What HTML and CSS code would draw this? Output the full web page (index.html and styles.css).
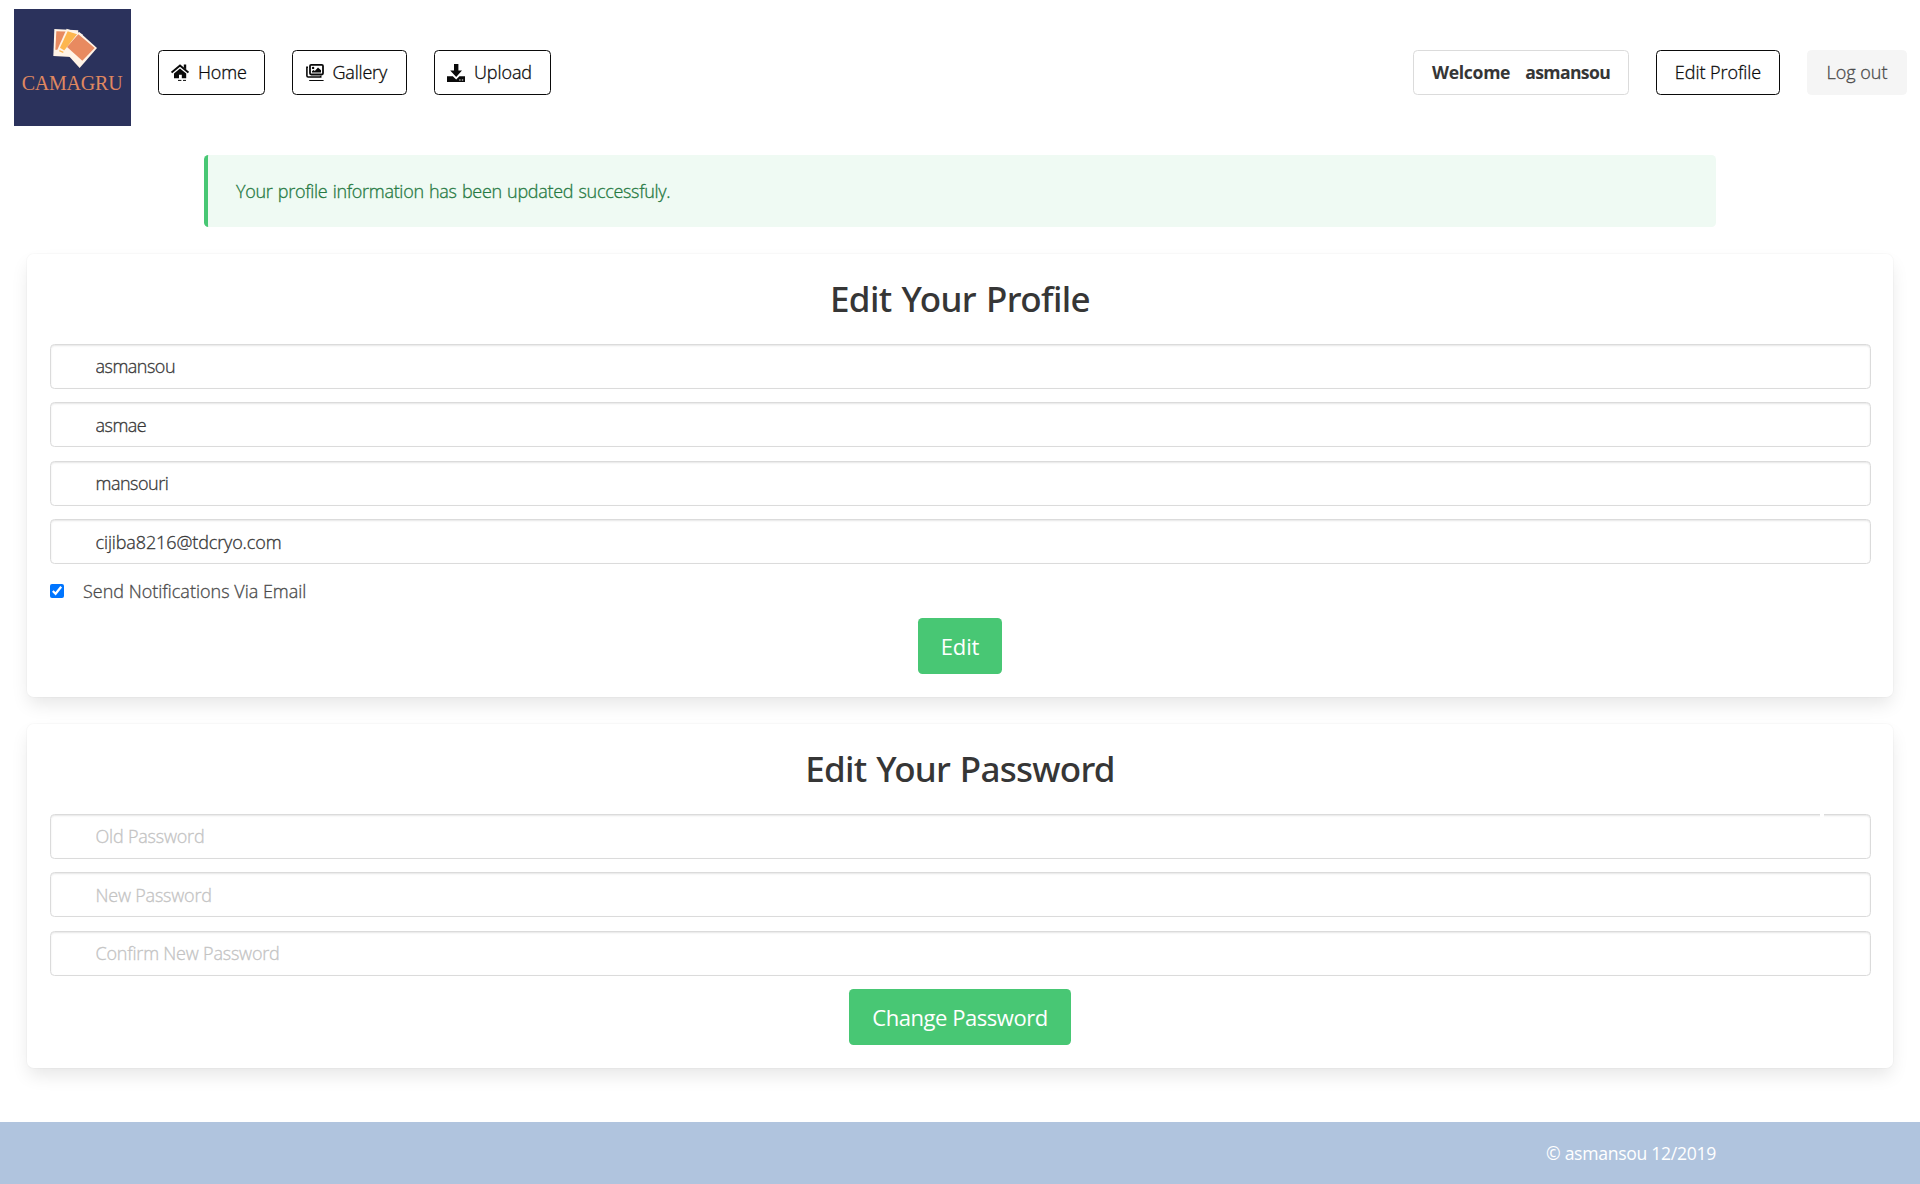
FILE: index.html
```html
<!DOCTYPE html>
<html lang="en">
<head>
<meta charset="utf-8">
<title>Camagru - Edit Profile</title>
<link rel="stylesheet" href="styles.css">
</head>
<body>
<nav class="navbar">
  <a class="logo" aria-label="Camagru">
    <svg viewBox="42 27 351 351" width="117" height="117">
      <rect x="42" y="27" width="351" height="351" fill="#2b325c"/>
      <path d="M163 87L235 91L228 172L160 168Z" fill="#fff3e6"/>
      <path d="M169 94L220 95L190 150L166 149Z" fill="#e88a60"/>
      <path d="M200 86L248 103L222 175L170 154Z" fill="#fff3e6"/>
      <path d="M203 94L236 104L200 156L180 143Z" fill="#fdb64e"/>
      <path d="M178 152L190 157M198 150L222 170" stroke="#fdb64e" stroke-width="4"/>
      <path d="M237 95L291 144L239 204L192 152Z" fill="#fff3e6"/>
      <path d="M235 103L284 144L247 182L201 141Z" fill="#e88a60"/>
      <text x="65" y="271" font-size="60" textLength="303" lengthAdjust="spacing" fill="#e08860" class="logo-text">CAMAGRU</text>
    </svg>
  </a>
  <a class="button home">
    <svg class="icon" viewBox="0 0 18 18"><path d="M.6 8.6L9 1.6L17.4 8.6" fill="none" stroke="#0a0a0a" stroke-width="2"/><path d="M12.8.5h2.4v5l-2.4-2zM9 4.6L15.2 9.6V14.3H10.8V10.8H8V14.3H3V9.6Z"/><path d="M7 16.4h3.4M12 16.4h3" stroke="#0a0a0a"/></svg>
    <span>Home</span>
  </a>
  <a class="button gallery">
    <svg class="icon" viewBox="0 0 18 18"><rect x="4" y=".9" width="13" height="9.6" rx="1.2" fill="none" stroke="#0a0a0a" stroke-width="1.8"/><path d="M2 3.2H.9V11.8Q.9 13 2.1 13H14.7V11.8" fill="none" stroke="#0a0a0a" stroke-width="1.6"/><circle cx="7.1" cy="3.9" r="1.2"/><path d="M6 8.6V7.2L7.5 5.9L8.8 7L12 3.4L15 6.2V8.6Z"/><path d="M3.2 16.5H17.6" stroke="#0a0a0a"/></svg>
    <span>Gallery</span>
  </a>
  <a class="button upload">
    <svg class="icon" viewBox="0 0 18 18"><path d="M7 0h4.4v6.6h3.6L9.2 13L3.2 6.6H7Z"/><path d="M0 12.2H5.8L9.2 15.4L12.4 12.2H18V18H0Z"/><path d="M12.2 16h1.4M14.8 16h1.4" stroke="#fff" stroke-width="1.2"/></svg>
    <span>Upload</span>
  </a>
  <div class="navbar-end">
    <span class="button welcome"><strong>Welcome</strong><strong class="user">asmansou</strong></span>
    <a class="button profile">Edit Profile</a>
    <a class="button logout">Log out</a>
  </div>
</nav>
<div class="message">Your profile information has been updated successfuly.</div>
<main>
  <form class="box">
    <h1 class="title">Edit Your Profile</h1>
    <input class="input name" type="text" value="asmansou">
    <input class="input name" type="text" value="asmae">
    <input class="input name" type="text" value="mansouri">
    <input class="input" type="email" value="cijiba8216@tdcryo.com">
    <label class="checkbox"><input type="checkbox" checked><span>Send Notifications Via Email</span></label>
    <button class="submit edit" type="button">Edit</button>
  </form>
  <form class="box">
    <h1 class="title password-title">Edit Your Password</h1>
    <div class="field"><input class="input" type="password" placeholder="Old Password"><i class="notch"></i></div>
    <input class="input" type="password" placeholder="New Password">
    <input class="input" type="password" placeholder="Confirm New Password">
    <button class="submit change" type="button">Change Password</button>
  </form>
</main>
<footer class="footer">© asmansou 12/2019</footer>
</body>
</html>
```
FILE: styles.css
```css
* { box-sizing: border-box; }
body {
  margin: 0;
  min-height: 1184px;
  display: flex;
  flex-direction: column;
  background: #fff;
  color: #4a4a4a;
  font: 300 18px/27px "Open Sans", sans-serif;
  letter-spacing: -.2px;
  -webkit-text-stroke: .3px;
}
.navbar {
  display: flex;
  align-items: center;
  gap: 27px;
  height: 127px;
  padding: 9px 13px 9px 14px;
}
.logo { width: 117px; height: 117px; align-self: flex-start; }
.logo svg { display: block; }
.logo-text { font-family: "Liberation Serif", serif; font-weight: 400; letter-spacing: 0; -webkit-text-stroke: 0; }
.button {
  display: flex;
  align-items: center;
  height: 45px;
  margin-top: 18px;
  border: 1px solid #0a0a0a;
  border-radius: 4.5px;
  color: #0a0a0a;
  white-space: nowrap;
}
.icon { width: 18px; height: 18px; flex: none; fill: #0a0a0a; }
.home { width: 107px; padding-left: 12px; gap: 9px; letter-spacing: -.1px; }
.gallery { width: 115px; padding-left: 13px; gap: 8.5px; letter-spacing: -.2px; }
.upload { width: 117px; padding-left: 12px; gap: 9px; letter-spacing: -.1px; }
.navbar-end { display: flex; gap: 27px; margin-left: auto; }
.welcome {
  width: 216px;
  justify-content: center;
  gap: 15px;
  border-color: #dbdbdb;
  color: #363636;
  font-size: 17.6px;
  letter-spacing: -.3px;
  -webkit-text-stroke: 0;
}
.welcome strong { font-weight: 700; }
.user { letter-spacing: -.65px; }
.profile { width: 124px; justify-content: center; letter-spacing: -.05px; }
.logout { width: 100px; justify-content: center; border-color: #f5f5f5; background: #f5f5f5; color: #4a4a4a; letter-spacing: 0; }
.message {
  width: 1512px;
  height: 72px;
  margin: 28px auto 27px;
  padding: 22.5px 27px 22.5px 28px;
  border-left: 4px solid #48c774;
  border-radius: 4.5px;
  background: #effaf3;
  color: #257942;
  letter-spacing: -.3px;
  word-spacing: .9px;
}
main { display: flex; flex-direction: column; gap: 27px; padding: 0 27px; }
.box {
  display: flex;
  flex-direction: column;
  gap: 13.5px;
  padding: 22.5px;
  border-radius: 6.75px;
  background: #fff;
  box-shadow: 0 9px 18px -2.25px rgba(10,10,10,.1), 0 0 0 1px rgba(10,10,10,.02);
}
.title {
  margin: 0 0 9.5px;
  color: #363636;
  font: 500 35px/44px "Noto Sans", sans-serif;
  letter-spacing: -.6px;
  word-spacing: 1.5px;
  text-align: center;
  -webkit-text-stroke: 0;
}
.password-title { margin-top: .4px; letter-spacing: -.75px; }
.input {
  display: block;
  width: 100%;
  height: 45px;
  padding: 0 45px;
  border: 1px solid #dbdbdb;
  border-radius: 4.5px;
  outline: 0;
  background: #fff;
  box-shadow: inset 0 1px 2px rgba(10,10,10,.1);
  color: #363636;
  font: inherit;
  letter-spacing: -.12px;
}
.name { letter-spacing: -.5px; }
.input::placeholder { color: #c3c3c3; opacity: 1; letter-spacing: -.2px; }
.field { position: relative; }
.notch { position: absolute; top: 0; right: 47px; width: 4px; height: 3px; background: #fff; }
.checkbox { display: flex; align-items: center; gap: 19.5px; height: 27px; letter-spacing: 0; }
.checkbox input { width: 14px; height: 14px; margin: 0; }
.submit {
  align-self: center;
  height: 56.25px;
  padding: 0;
  border: 0;
  border-radius: 4.5px;
  background: #48c774;
  color: #fff;
  font: 400 22px "Open Sans", sans-serif;
  -webkit-text-stroke: 0;
}
.edit { width: 84px; letter-spacing: -.1px; }
.change { width: 222px; letter-spacing: -.45px; }
.footer {
  height: 62px;
  margin-top: auto;
  padding: 18px 204px;
  background: #b0c4de;
  color: #fff;
  font-size: 17.6px;
  font-weight: 400;
  letter-spacing: -.3px;
  text-align: right;
  -webkit-text-stroke: 0;
}
```
